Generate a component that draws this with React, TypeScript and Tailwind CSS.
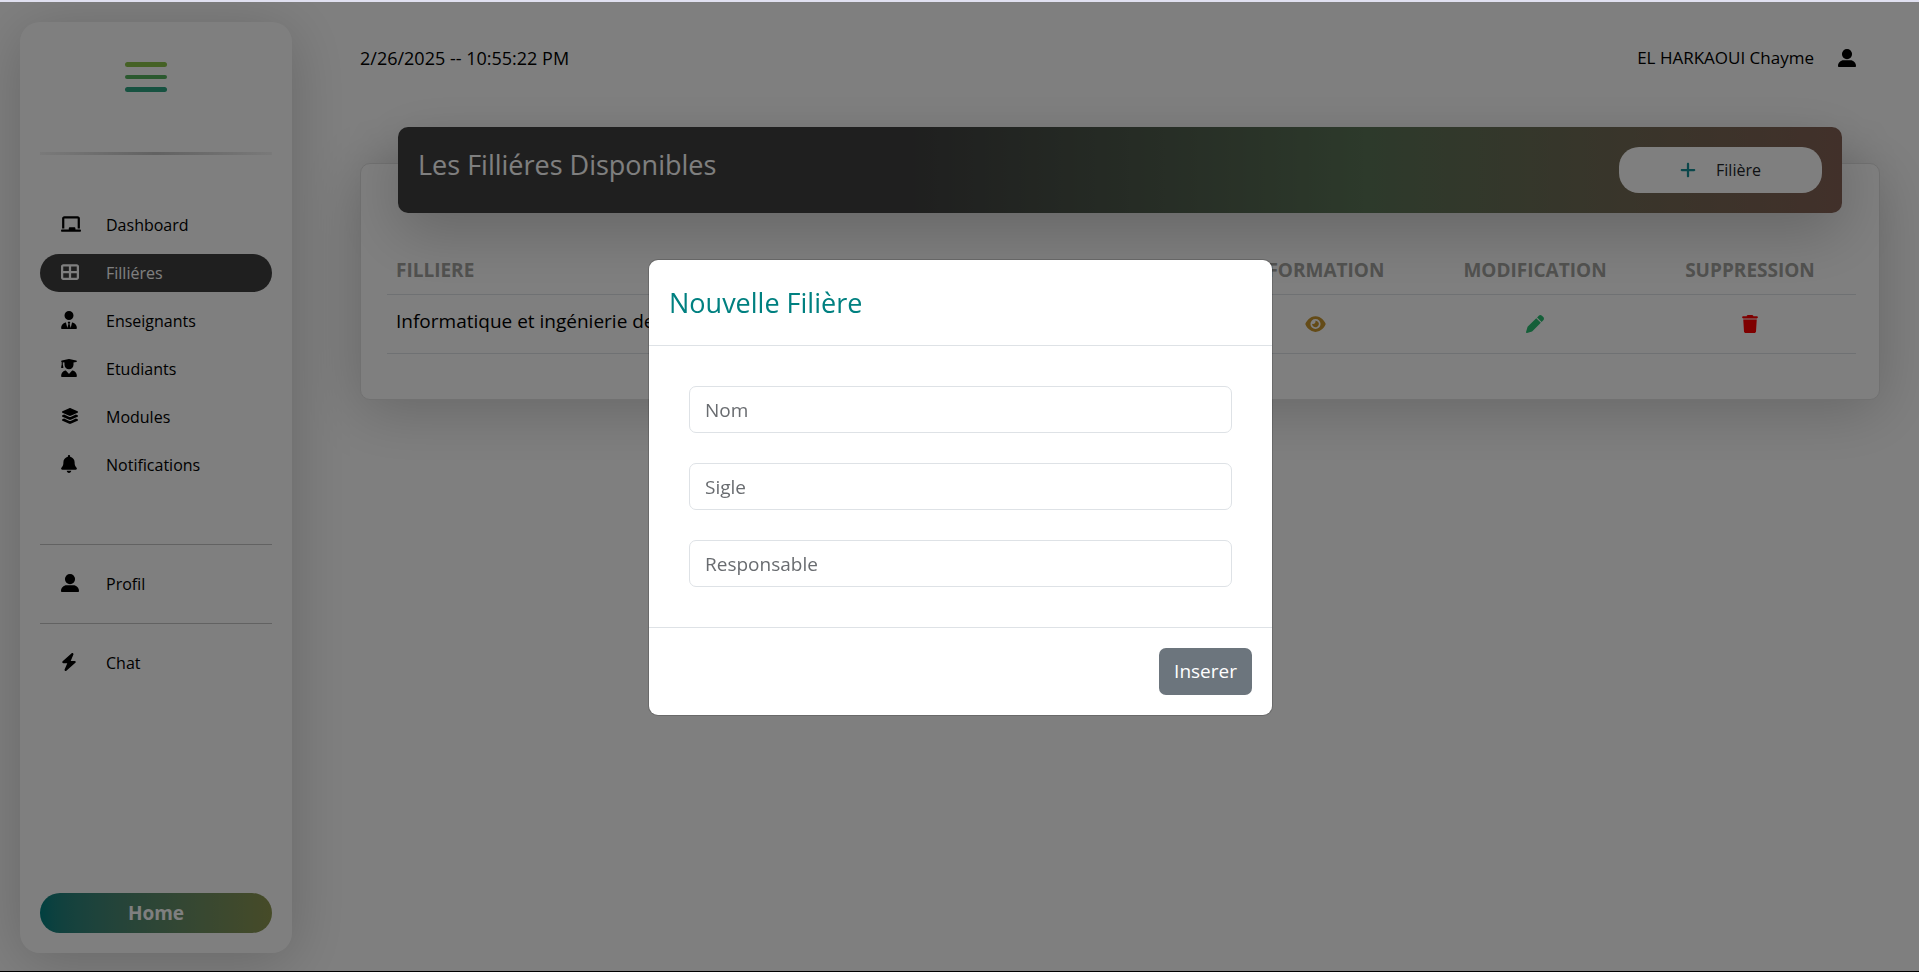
import { FaChalkboard, FaTableCellsLarge, FaUserTie, FaUserGraduate, FaLayerGroup, FaBell, FaUserLarge, FaBolt, FaPlus, FaEye, FaPen, FaTrash } from "react-icons/fa6";

type Link = { label: string; Icon: typeof FaBell; iconWidth: string; active?: boolean };

const mainLinks: Link[] = [
  { label: "Dashboard", Icon: FaChalkboard, iconWidth: "w-5" },
  { label: "Filliéres", Icon: FaTableCellsLarge, iconWidth: "w-[18px]", active: true },
  { label: "Enseignants", Icon: FaUserTie, iconWidth: "w-4" },
  { label: "Etudiants", Icon: FaUserGraduate, iconWidth: "w-4" },
  { label: "Modules", Icon: FaLayerGroup, iconWidth: "w-[18px]" },
  { label: "Notifications", Icon: FaBell, iconWidth: "w-4" },
];

function NavLink({ label, Icon, iconWidth, active = false }: Link) {
  return (
    <a
      href="#"
      className={`flex h-[38px] items-center rounded-full pl-[21px] text-[16px] ${active ? "bg-[#3e3e3e] text-white" : "text-black"}`}
    >
      <span className="flex w-[45px] pb-0.5">
        <Icon className={`h-[18px] ${iconWidth}`} aria-hidden />
      </span>
      {label}
    </a>
  );
}

function Sidebar() {
  return (
    <aside className="flex w-[272px] shrink-0 flex-col rounded-[20px] bg-white p-5 shadow-[0_8px_60px_rgba(0,0,0,0.2)]">
      <button type="button" aria-label="Menu" className="mt-5 ml-[85px] flex w-[42px] flex-col gap-2">
        <span className="h-[5px] w-full rounded-full bg-[#8bc34a]" />
        <span className="h-[4px] w-full rounded-full bg-[#56b35f]" />
        <span className="h-[5px] w-full rounded-full bg-[#2ea482]" />
      </button>
      <div className="mt-[60px] h-[3px] bg-linear-to-r from-[#f4f4f4] via-[#c4c4c4] to-[#f4f4f4]" />
      <nav className="mt-[51px] flex flex-col gap-[10px]">
        {mainLinks.map((l) => (
          <NavLink key={l.label} {...l} />
        ))}
      </nav>
      <hr className="mt-[60px] border-[#c4c4c4]" />
      <div className="py-5">
        <NavLink label="Profil" Icon={FaUserLarge} iconWidth="w-[18px]" />
      </div>
      <hr className="border-[#c4c4c4]" />
      <div className="py-5">
        <NavLink label="Chat" Icon={FaBolt} iconWidth="w-4" />
      </div>
      <a
        href="#"
        className="mt-auto flex h-10 items-center justify-center rounded-full bg-linear-to-r from-[#008080] to-[#8d9650] text-[19px] font-bold text-white"
      >
        Home
      </a>
    </aside>
  );
}

function Card() {
  return (
    <section className="mt-[91px] rounded-[10px] border border-[#e2e2e2] bg-white pr-[23px] pb-[45px] pl-[26px] shadow-[0_10px_60px_rgba(0,0,0,0.2)]">
      <div className="mr-[14px] ml-[11px] -mt-[37px] flex h-[86px] items-start justify-between rounded-[10px] bg-linear-to-r from-[#3e3e3e] from-35% via-[#5a7456] via-67% to-[#836155] p-5 shadow-[0_20px_60px_rgba(0,0,0,0.2)]">
        <h1 className="text-[27px] leading-9 text-white">Les Filliéres Disponibles</h1>
        <button type="button" className="flex h-[46px] w-[203px] items-center justify-center gap-5 rounded-[20px] bg-white text-[16px] text-[#212529]">
          <FaPlus className="h-[18px] w-4 text-[#178f96]" aria-hidden />
          Filière
        </button>
      </div>
      <table className="mt-[30px] w-full text-left text-[19px]">
        <thead>
          <tr className="h-[51px] border-b border-[#dee2e6] text-[#a0a09c]">
            <th className="px-[9px] pt-1">FILLIERE</th>
            <th className="w-[222px] pt-1 text-center">INFORMATION</th>
            <th className="w-[218px] pt-1 text-center">MODIFICATION</th>
            <th className="w-[212px] pt-1 text-center">SUPPRESSION</th>
          </tr>
        </thead>
        <tbody>
          <tr className="h-[59px] border-b border-[#dee2e6]">
            <td className="px-[9px] pb-1">Informatique et ingénierie des données</td>
            <td><button type="button" aria-label="Information" className="mx-auto block text-[#c8962f]"><FaEye className="h-[18px] w-[21px]" /></button></td>
            <td><button type="button" aria-label="Modifier" className="mx-auto block text-[#2bbf73]"><FaPen className="size-[18px]" /></button></td>
            <td><button type="button" aria-label="Supprimer" className="mx-auto block text-[#ff0000]"><FaTrash className="h-[18px] w-4" /></button></td>
          </tr>
        </tbody>
      </table>
    </section>
  );
}

function Modal() {
  return (
    <div className="fixed inset-0 flex items-start justify-center bg-black/50 pt-[260px] pl-0.5">
      <form role="dialog" aria-label="Nouvelle Filière" className="w-[623px] rounded-[9px] bg-white shadow-[0_0_0_1px_rgba(0,0,0,0.17)]">
        <header className="h-[86px] border-b border-[#dee2e6] p-5">
          <h2 className="text-[27px] leading-[45px] text-[#008080]">Nouvelle Filière</h2>
        </header>
        <div className="flex flex-col gap-[30px] px-10 py-10">
          {["Nom", "Sigle", "Responsable"].map((f) => (
            <input
              key={f}
              aria-label={f}
              placeholder={f}
              className="h-[47px] w-full rounded-[7px] border border-[#dee2e6] px-[15px] text-[19px] placeholder:text-[#696c70]"
            />
          ))}
        </div>
        <footer className="flex justify-end border-t border-[#dee2e6] p-5">
          <button type="submit" className="h-[47px] rounded-[7px] bg-[#6c757d] px-[15px] text-[19px] text-white">Inserer</button>
        </footer>
      </form>
    </div>
  );
}

export default function App() {
  return (
    <div className="flex min-h-screen flex-col border-t-2 border-b border-t-[#e0e0f0] border-b-black bg-white font-['Open_Sans','Noto_Sans',sans-serif] text-black">
      <div className="flex flex-1 gap-[68px] pt-5 pr-[39px] pb-[18px] pl-5">
        <Sidebar />
        <main className="min-w-0 flex-1">
          <header className="flex items-center justify-between pt-[22px] pr-[24px]">
            <time className="text-[18px] leading-7">2/26/2025 -- 10:55:22 PM</time>
            <a href="#" className="flex items-center gap-6 text-[17px] leading-7">
              EL HARKAOUI Chayme
              <FaUserLarge className="size-[18px]" aria-hidden />
            </a>
          </header>
          <Card />
        </main>
      </div>
      <Modal />
      <div className="pointer-events-none fixed inset-x-0 top-0 h-0.5 bg-[#e0e0f0]" />
    </div>
  );
}
